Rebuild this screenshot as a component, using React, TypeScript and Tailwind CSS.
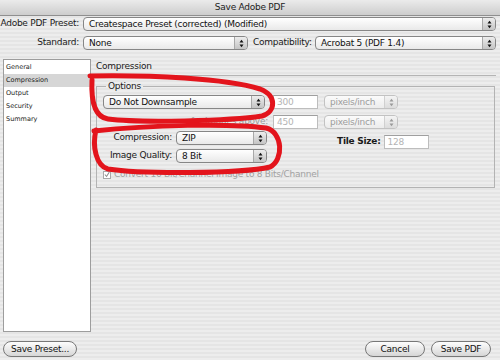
import React from 'react';

const stripes =
  'bg-[repeating-linear-gradient(0deg,#ededed_0px,#ededed_2px,#e5e5e5_2px,#e5e5e5_4px)]';

function Arrows({ dim }: { dim?: boolean }) {
  const c = dim ? '#9a9a9a' : '#111';
  return (
    <svg width="5" height="9" viewBox="0 0 5 9">
      <path d="M0.5 3.5 L2.5 0.8 L4.5 3.5 Z" fill={c} />
      <path d="M0.5 5.5 L2.5 8.2 L4.5 5.5 Z" fill={c} />
    </svg>
  );
}

function Popup({ text, w, dim }: { text: string; w: string; dim?: boolean }) {
  return (
    <div
      className={`${w} h-[14px] flex rounded-[4px] border overflow-hidden ${
        dim
          ? 'border-[#c2c2c2] text-[#9c9c9c] bg-linear-to-b from-[#fbfbfb] to-[#ececec]'
          : 'border-[#868686] text-[#111] bg-linear-to-b from-[#ffffff] to-[#e9e9e9]'
      }`}
    >
      <div className="flex-1 pl-[5px] flex items-center truncate leading-none">{text}</div>
      <div
        className={`w-[13px] flex items-center justify-center border-l ${
          dim
            ? 'border-[#d0d0d0] bg-linear-to-b from-[#f4f4f4] to-[#dcdcdc]'
            : 'border-[#a8a8a8] bg-linear-to-b from-[#ededed] to-[#c4c4c4]'
        }`}
      >
        <Arrows dim={dim} />
      </div>
    </div>
  );
}

function Field({ text, w }: { text: string; w: string }) {
  return (
    <div
      className={`${w} h-[14px] border border-[#bdbdbd] border-t-[#9f9f9f] bg-white text-[#b4b4b4] pl-[3px] flex items-center leading-none`}
    >
      {text}
    </div>
  );
}

function Button({ label, w }: { label: string; w: string }) {
  return (
    <div
      className={`${w} h-[16px] rounded-full border border-[#777] bg-linear-to-b from-[#fdfdfd] via-[#eaeaea] to-[#d6d6d6] flex items-center justify-center text-[#111] leading-none`}
    >
      {label}
    </div>
  );
}

export default function App() {
  const items = ['General', 'Compression', 'Output', 'Security', 'Summary'];

  return (
    <div
      className={`relative w-[500px] h-[360px] overflow-hidden ${stripes} text-[9px] tracking-[-0.25px] text-[#1a1a1a]`}
      style={{ fontFamily: '"DejaVu Sans", "Liberation Sans", sans-serif' }}
    >
      {/* title bar */}
      <div className="h-[16px] flex items-center justify-center border-b border-[#8f8f8f] bg-linear-to-b from-[#ebebeb] to-[#cdcdcd] text-[#222]">
        Save Adobe PDF
      </div>

      {/* preset / standard rows */}
      <div className="flex items-center mt-[1px]">
        <div className="w-[81px] text-right pr-[2px]">Adobe PDF Preset:</div>
        <div className="ml-[2px]">
          <Popup text="Createspace Preset (corrected) (Modified)" w="w-[413px]" />
        </div>
      </div>
      <div className="flex items-center mt-[5px]">
        <div className="w-[81px] text-right pr-[2px]">Standard:</div>
        <div className="ml-[2px]">
          <Popup text="None" w="w-[165px]" />
        </div>
        <div className="ml-[5px] w-[60px]">Compatibility:</div>
        <div className="ml-[2px]">
          <Popup text="Acrobat 5 (PDF 1.4)" w="w-[181px]" />
        </div>
      </div>

      {/* main area */}
      <div className="flex mt-[9px] ml-[3px]">
        <div className="w-[88px] h-[273px] bg-white border border-[#9d9d9d] pt-[1px] text-[6.5px] tracking-normal">
          {items.map((it) => (
            <div
              key={it}
              className={`h-[13px] pl-[2px] flex items-center ${
                it === 'Compression' ? 'bg-[#d6d6d6]' : ''
              }`}
            >
              {it}
            </div>
          ))}
        </div>

        <div className="w-[405px]">
          <div className="h-[17px] pl-[5px] flex items-center border-b border-[#b4b4b4]">
            Compression
          </div>

          <fieldset className="mt-[5px] ml-[5px] mr-[1px] border border-[#b3b3b3] pb-[5px]">
            <legend className="ml-[9px] px-[2px] leading-[11px]">Options</legend>

            <div className="flex items-center pl-[6px] mt-[3px]">
              <Popup text="Do Not Downsample" w="w-[162px]" />
              <div className="ml-[8px]">
                <Field text="300" w="w-[45px]" />
              </div>
              <div className="ml-[6px]">
                <Popup text="pixels/inch" w="w-[74px]" dim />
              </div>
            </div>

            <div className="flex items-center pl-[6px] mt-[6px]">
              <div className="w-[165px] text-right text-[#9a9a9a]">for images above:</div>
              <div className="ml-[5px]">
                <Field text="450" w="w-[45px]" />
              </div>
              <div className="ml-[6px]">
                <Popup text="pixels/inch" w="w-[74px]" dim />
              </div>
            </div>

            <div className="flex pl-[6px] mt-[2px]">
              <div className="flex flex-col gap-[4px]">
                <div className="flex items-center">
                  <div className="w-[69px] text-right">Compression:</div>
                  <div className="ml-[4px]">
                    <Popup text="ZIP" w="w-[91px]" />
                  </div>
                </div>
                <div className="flex items-center">
                  <div className="w-[69px] text-right">Image Quality:</div>
                  <div className="ml-[4px]">
                    <Popup text="8 Bit" w="w-[91px]" />
                  </div>
                </div>
              </div>
              <div className="flex items-center self-start mt-[4px] ml-[70px]">
                <div className="font-bold">Tile Size:</div>
                <div className="ml-[3px]">
                  <Field text="128" w="w-[45px]" />
                </div>
              </div>
            </div>

            <div className="flex items-center pl-[6px] mt-[5px] text-[#a2a2a2]">
              <div className="w-[8px] h-[8px] border border-[#a8a8a8] bg-white flex items-center justify-center">
                <svg width="7" height="7" viewBox="0 0 7 7">
                  <path d="M1 3.5 L3 5.8 L6.2 0.6" stroke="#8a8a8a" strokeWidth="1.2" fill="none" />
                </svg>
              </div>
              <div className="ml-[3px]">Convert 16 Bit/Channel Image to 8 Bits/Channel</div>
            </div>
          </fieldset>
        </div>
      </div>

      {/* bottom buttons */}
      <div className="flex items-center mt-[9px] px-[3px]">
        <Button label="Save Preset..." w="w-[74px]" />
        <div className="flex-1" />
        <Button label="Cancel" w="w-[60px]" />
        <div className="ml-[6px] mr-[6px]">
          <Button label="Save PDF" w="w-[60px]" />
        </div>
      </div>

      {/* red hand-drawn marks */}
      <svg
        className="absolute inset-0 pointer-events-none"
        width="500"
        height="360"
        viewBox="0 0 500 360"
      >
        <path
          d="M90 76 C150 75, 225 78, 260 89 C277 95, 276 112, 262 116 C230 121, 140 123, 108 119 C94 117, 91 100, 92 80"
          stroke="#e3141c"
          strokeWidth="5"
          fill="none"
          strokeLinecap="round"
        />
        <path
          d="M94 131 C150 125, 230 123, 266 128 C283 132, 284 160, 270 167 C240 174, 140 174, 108 169 C96 166, 92 146, 96 130"
          stroke="#e3141c"
          strokeWidth="5"
          fill="none"
          strokeLinecap="round"
        />
      </svg>
    </div>
  );
}
